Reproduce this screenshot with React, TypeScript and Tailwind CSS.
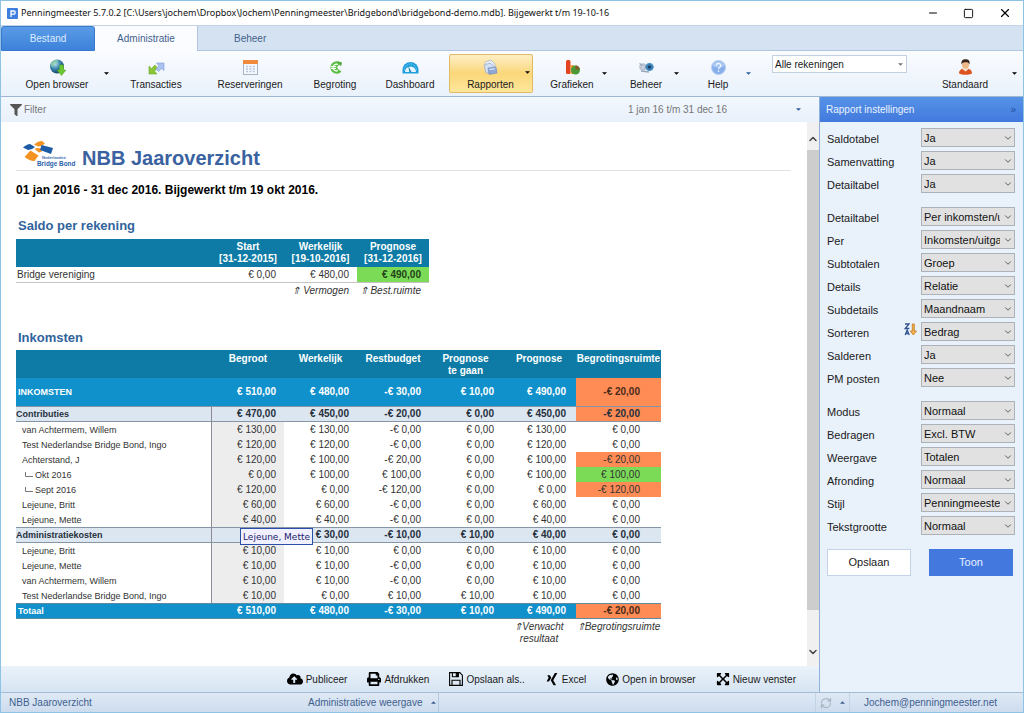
import React from "react";
import {
  FaCloudUploadAlt,
  FaExpandArrowsAlt,
  FaFilter,
  FaGlobeAmericas,
  FaPrint,
  FaXing,
} from "react-icons/fa";
import { ChevronDown, ChevronUp, Minus, RefreshCw, Square, X } from "lucide-react";

function Caret({ className = "text-black", up = false }: { className?: string; up?: boolean }) {
  return (
    <svg viewBox="0 0 6 3" className={`h-[3px] w-[5px] shrink-0 ${className}`} aria-hidden="true">
      <path d={up ? "M0 3h6L3 0z" : "M0 0h6L3 3z"} fill="currentColor" />
    </svg>
  );
}

function AppIcon() {
  return (
    <svg viewBox="0 0 11 11" className="size-[11px]" aria-hidden="true">
      <rect width="11" height="11" rx="1" fill="#3f7fe0" />
      <path d="M4 9V3h2.6a1.6 1.6 0 0 1 0 3.2H4" fill="none" stroke="#fff" strokeWidth="1.3" />
    </svg>
  );
}

function BrowserIcon() {
  return (
    <svg viewBox="0 0 17 17" className="size-[17px]" aria-hidden="true">
      <defs>
        <radialGradient id="globe" cx="35%" cy="30%" r="75%">
          <stop offset="0" stopColor="#bfe4ef" />
          <stop offset=".5" stopColor="#3a86ad" />
          <stop offset="1" stopColor="#123f63" />
        </radialGradient>
      </defs>
      <circle cx="8" cy="7.5" r="7" fill="url(#globe)" />
      <path d="M2 4c2-3 5-3.500 7-2.500L7.500 4 5 5 4 8 2 7z" fill="#8ccf9c" opacity=".7" />
      <path d="M10.500 6h4v5H17l-4.500 5.500L8 11h2.500z" fill="#6cc832" stroke="#4ba01f" strokeWidth=".5" />
    </svg>
  );
}

function TransferIcon() {
  return (
    <svg viewBox="0 0 17 17" className="size-[17px]" aria-hidden="true">
      <path d="M1 15V7l2.500 2.500L7 6l2.500 3-3 3.200L9 15z" fill="#8cc63a" stroke="#6da727" strokeWidth=".6" />
      <path d="M16 4v7.500L13.700 9.500 10.500 12.500 8 10l3-3-2.500-3z" fill="#a9c2ee" stroke="#7c9cdc" strokeWidth=".6" />
    </svg>
  );
}

function CalendarIcon() {
  return (
    <svg viewBox="0 0 17 17" className="size-[17px]" aria-hidden="true">
      <rect x="1.500" y="1.500" width="14" height="14" fill="#f5f8fc" stroke="#a7b4c8" />
      <rect x="1" y="1" width="15" height="4" fill="#f08a3c" />
      <path d="M4 7.500h9M4 10h9M4 12.500h9" stroke="#b9c6dc" strokeWidth="1.500" strokeDasharray="2 1.400" />
    </svg>
  );
}

function EuroIcon() {
  return (
    <svg viewBox="0 0 17 17" className="size-[17px]" aria-hidden="true">
      <path d="M14.500 4.500A6.300 6.300 0 1 0 14.500 12.500L11.500 10.500 10 8.500l1.500-2z" fill="#5cbf45" />
      <path d="M10.500 2.300l4.500 1.200-1 4z" fill="#4aa637" />
      <path d="M10.800 5.600a3.300 3.300 0 1 0 0 5.800M3.800 7.700h5.400M3.800 9.500h5" fill="none" stroke="#fff" strokeWidth="1.200" />
    </svg>
  );
}

function GaugeIcon() {
  return (
    <svg viewBox="0 0 17 17" className="size-[17px]" aria-hidden="true">
      <path d="M.5 14.500V11a8 8 0 0 1 16 0v3.500z" fill="#1f9fdc" />
      <path d="M3 13a5.500 5.500 0 0 1 11 0z" fill="#e9f7fd" />
      <path d="M2.500 11a6 6 0 0 1 12 0" fill="none" stroke="#9edcf6" strokeWidth="1" strokeDasharray="1 1.500" />
      <path d="M7.500 13.500L6 6.500l3.500 6.500z" fill="#1580bd" />
    </svg>
  );
}

function ReportsIcon() {
  return (
    <svg viewBox="0 0 17 17" className="size-[17px]" aria-hidden="true">
      <path d="M3 3l6-2 4 4v8H5z" fill="#e9eff9" stroke="#a6b3ca" strokeWidth=".7" />
      <path d="M2 6l6-2 4 3v7H4z" fill="#d3dff2" stroke="#98a8c6" strokeWidth=".7" />
      <path d="M6 9l8-1 1 6-8 1.500z" fill="#8fa9d6" stroke="#7189b8" strokeWidth=".6" />
      <path d="M7.500 10.500l5.500-.7" stroke="#e8effb" />
    </svg>
  );
}

function ChartIcon() {
  return (
    <svg viewBox="0 0 17 17" className="size-[17px]" aria-hidden="true">
      <rect x="2" y="1" width="4.500" height="14" rx="1.500" fill="#e4431f" />
      <rect x="6.500" y="6" width="3.500" height="9" rx="1" fill="#f09a3a" />
      <circle cx="11.500" cy="11" r="4.500" fill="#4b9a35" />
      <path d="M11.500 11V6.500A4.500 4.500 0 0 1 15.800 10z" fill="#8a5a2a" />
    </svg>
  );
}

function ManageIcon() {
  return (
    <svg viewBox="0 0 17 17" className="size-[17px]" aria-hidden="true">
      <circle cx="5" cy="8" r="3.300" fill="#c3ccd8" stroke="#98a4b5" strokeDasharray="1.500 1" />
      <path d="M1.500 4.500l3 2M3 12l8 1" stroke="#9aa8bd" strokeWidth="1.500" />
      <circle cx="11.500" cy="8" r="4" fill="#5b9cc9" />
      <path d="M7 8l4.500-4L16 8l-4.500 4z" fill="#3b7fb4" />
      <circle cx="11.500" cy="8" r="1.600" fill="#173d63" />
    </svg>
  );
}

function HelpIcon() {
  return (
    <svg viewBox="0 0 17 17" className="size-[17px]" aria-hidden="true">
      <circle cx="8.500" cy="8.500" r="7" fill="#86aeea" stroke="#b9d0f2" />
      <path d="M2.500 7a6.200 6.200 0 0 1 12 0c-3 2-9 2-12 0z" fill="#aac8f4" />
      <path d="M6.300 6.500a2.200 2.200 0 1 1 3.300 2q-1.100.6-1.100 1.700M8.500 11.600v1.400" fill="none" stroke="#f4f8ff" strokeWidth="1.300" />
    </svg>
  );
}

function UserIcon() {
  return (
    <svg viewBox="0 0 17 17" className="size-[17px]" aria-hidden="true">
      <path d="M2 14.500c0-4 3-5 6.500-5s6.500 1 6.500 5c-3 1.800-10 1.800-13 0z" fill="#dd5420" />
      <path d="M5.500 10l3 2.500 3-2.500-1.500-1.500H7z" fill="#f7e4d5" />
      <ellipse cx="8.500" cy="5.500" rx="3.500" ry="4.300" fill="#eeb98a" />
      <path d="M4.500 5.500C4 1.500 6 .3 8.500.3s4.800 1.200 4 5.200c-.8-2-2-2.500-4-2.300-1.800.1-3.200.3-4 2.300z" fill="#35241c" />
    </svg>
  );
}

function FloppyIcon() {
  return (
    <svg viewBox="0 0 14 14" className="size-[14px]" fill="none" stroke="#000" strokeWidth="1.100" aria-hidden="true">
      <path d="M.6.6h10.200l2.600 2.600v10.200H.6z" />
      <path d="M3.400.6v4.200h6V.6M3 13.400V8.200h8v5.200M7.300 1.600v2h1.300v-2z" />
    </svg>
  );
}

function SortIcon() {
  return (
    <svg viewBox="0 0 13 13" className="size-[13px]" aria-hidden="true">
      <path d="M1 1h4L1.300 5.500H5.300M1.200 12l2-5 2 5M1.800 10.500h2.700" fill="none" stroke="#33558f" strokeWidth="1.300" />
      <path d="M8.300 1h2v7H12.500L9.300 12 6.300 8h2z" fill="#f6b04f" stroke="#c57a1d" strokeWidth=".8" />
    </svg>
  );
}

function BridgeLogo() {
  return (
    <svg viewBox="0 0 60 30" className="h-[30px] w-[60px]" role="img" aria-label="Nederlandse Bridge Bond">
      <path d="M12 4.500q4-4 8-3.500l3 2.500q-3 3-7 3z" fill="#f39324" />
      <path d="M1 7.500q4-3.500 7-3.500l5 3q-3 3-7 3z" fill="#1c5ba6" />
      <path d="M12.500 9q3-1.500 6-.5l1.500 3-3 1z" fill="#f39324" />
      <path d="M19.500 5l11.500 3-2 6-11-4z" fill="#1c5ba6" />
      <path d="M8.500 10.500l8 5-4 5.500q-4 .5-10-4z" fill="#f39324" />
      <text x="20" y="18.500" fontSize="4" fontFamily="Liberation Sans, sans-serif" fontWeight="700" fill="#3a6eb0">
        Nederlandse
      </text>
      <text x="15" y="25.500" fontSize="6.400" fontFamily="Liberation Sans, sans-serif" fontWeight="700" fill="#2a62aa">
        Bridge Bond
      </text>
    </svg>
  );
}

function Tool({ icon, label, width }: { icon: React.ReactNode; label: string; width: string }) {
  return (
    <button type="button" className={`flex flex-col items-center gap-px whitespace-nowrap ${width}`}>
      {icon}
      <span className="leading-4">{label}</span>
    </button>
  );
}

function MenuArrow({ label, blue = false }: { label: string; blue?: boolean }) {
  return (
    <button type="button" aria-label={`${label} menu`} className="flex w-[10px] items-center justify-center self-stretch pb-[6px]">
      <Caret className={blue ? "text-[#2d5a9e]" : "text-black"} />
    </button>
  );
}

type Row = { kind: "item" | "sub" | "group"; label: string; cells: string[]; mark?: "bad" | "good"; tip?: string };

const rows: Row[] = [
  { kind: "group", label: "Contributies", cells: ["€ 470,00", "€ 450,00", "-€ 20,00", "€ 0,00", "€ 450,00", "-€ 20,00"], mark: "bad" },
  { kind: "item", label: "van Achtermem, Willem", cells: ["€ 130,00", "€ 130,00", "-€ 0,00", "€ 0,00", "€ 130,00", "€ 0,00"] },
  { kind: "item", label: "Test Nederlandse Bridge Bond, Ingo", cells: ["€ 120,00", "€ 120,00", "-€ 0,00", "€ 0,00", "€ 120,00", "€ 0,00"] },
  { kind: "item", label: "Achterstand, J", cells: ["€ 120,00", "€ 100,00", "-€ 20,00", "€ 0,00", "€ 100,00", "-€ 20,00"], mark: "bad" },
  { kind: "sub", label: "Okt 2016", cells: ["€ 0,00", "€ 100,00", "€ 100,00", "€ 0,00", "€ 100,00", "€ 100,00"], mark: "good" },
  { kind: "sub", label: "Sept 2016", cells: ["€ 120,00", "€ 0,00", "-€ 120,00", "€ 0,00", "€ 0,00", "-€ 120,00"], mark: "bad" },
  { kind: "item", label: "Lejeune, Britt", cells: ["€ 60,00", "€ 60,00", "-€ 0,00", "€ 0,00", "€ 60,00", "€ 0,00"] },
  { kind: "item", label: "Lejeune, Mette", cells: ["€ 40,00", "€ 40,00", "-€ 0,00", "€ 0,00", "€ 40,00", "€ 0,00"] },
  {
    kind: "group",
    label: "Administratiekosten",
    cells: ["", "€ 30,00", "-€ 10,00", "€ 10,00", "€ 40,00", "€ 0,00"],
    tip: "Lejeune, Mette",
  },
  { kind: "item", label: "Lejeune, Britt", cells: ["€ 10,00", "€ 10,00", "€ 0,00", "€ 0,00", "€ 10,00", "€ 0,00"] },
  { kind: "item", label: "Lejeune, Mette", cells: ["€ 10,00", "€ 10,00", "-€ 0,00", "€ 0,00", "€ 10,00", "€ 0,00"] },
  { kind: "item", label: "van Achtermem, Willem", cells: ["€ 10,00", "€ 10,00", "-€ 0,00", "€ 0,00", "€ 10,00", "€ 0,00"] },
  { kind: "item", label: "Test Nederlandse Bridge Bond, Ingo", cells: ["€ 10,00", "€ 0,00", "€ 10,00", "€ 10,00", "€ 10,00", "€ 0,00"] },
];

const valuePadding = ["pr-2", "pr-2", "pr-2", "pr-2", "pr-[10px]", "pr-[21px]"];

function DetailRow({ row }: { row: Row }) {
  const group = row.kind === "group";
  const line = group ? "border-y border-[#8796a6] h-4 font-bold text-[#26303c]" : "h-[15px]";
  return (
    <tr className={group ? "bg-[#dce6f1]" : ""}>
      <th
        scope="row"
        className={`border-r border-r-[#8c8c96] text-left text-[9px] ${line} ${group ? "" : "font-normal"} ${
          row.kind === "sub" ? "pl-[9px]" : group ? "" : "pl-[6px]"
        }`}
      >
        {row.kind === "sub" && (
          <svg viewBox="0 0 8 5" className="mr-[2px] mb-[2px] inline h-[5px] w-2" aria-hidden="true">
            <path d="M.5 0v4.500H8" fill="none" stroke="#777" />
          </svg>
        )}
        {row.label}
      </th>
      {row.cells.map((cell, i) => {
        const bg =
          i === 5 && row.mark === "bad" ? "bg-[#ff8c55]" : i === 5 && row.mark === "good" ? "bg-[#7bdb57]" : i === 0 && !group ? "bg-[#ededed]" : "";
        return (
          <td key={i} className={`text-right ${line} ${valuePadding[i]} ${bg} ${i === 0 && row.tip ? "relative" : ""}`}>
            {cell}
            {i === 0 && row.tip && (
              <span
                role="tooltip"
                className="absolute top-0 left-[28px] z-10 flex h-[17px] items-center border border-[#2b4fa8] bg-[#f0f0ff] px-[2px] font-['DejaVu_Sans',sans-serif] text-[9px] font-normal whitespace-nowrap text-[#1c1c6e]"
              >
                {row.tip}
              </span>
            )}
          </td>
        );
      })}
    </tr>
  );
}

function TotalRow({ label, cells, tall = false }: { label: string; cells: string[]; tall?: boolean }) {
  const h = tall ? "h-7" : "h-4 border-y border-[#5f88a3]";
  return (
    <tr className="bg-[#1191cb] font-bold text-white">
      <th scope="row" className={`pl-[2px] text-left text-[9px] ${h}`}>
        {label}
      </th>
      {cells.map((cell, i) => (
        <td key={i} className={`text-right ${h} ${valuePadding[i]} ${i === 5 ? "bg-[#ff8c55] text-[#4a2a1a]" : ""}`}>
          {cell}
        </td>
      ))}
    </tr>
  );
}

const settings: [string, string][][] = [
  [
    ["Saldotabel", "Ja"],
    ["Samenvatting", "Ja"],
    ["Detailtabel", "Ja"],
  ],
  [
    ["Detailtabel", "Per inkomsten/uitgaven"],
    ["Per", "Inkomsten/uitgaven"],
    ["Subtotalen", "Groep"],
    ["Details", "Relatie"],
    ["Subdetails", "Maandnaam"],
    ["Sorteren", "Bedrag"],
    ["Salderen", "Ja"],
    ["PM posten", "Nee"],
  ],
  [
    ["Modus", "Normaal"],
    ["Bedragen", "Excl. BTW"],
    ["Weergave", "Totalen"],
    ["Afronding", "Normaal"],
    ["Stijl", "Penningmeester"],
    ["Tekstgrootte", "Normaal"],
  ],
];

function Setting({ id, label, value }: { id: string; label: string; value: string }) {
  return (
    <div className="flex h-[23px] items-center">
      <label htmlFor={id} className="flex-1 pt-1">
        {label}
      </label>
      {label === "Sorteren" && (
        <span className="mr-1 mb-1">
          <SortIcon />
        </span>
      )}
      <div className="relative w-[94px]">
        <select
          id={id}
          defaultValue={value}
          className="block h-[19px] w-full appearance-none overflow-hidden border border-[#adb2b8] bg-[#e1e1e1] pr-[14px] pl-[2px] leading-4 text-[#111]"
        >
          <option>{value}</option>
        </select>
        <ChevronDown className="pointer-events-none absolute top-[5px] right-[2px] size-[10px] text-[#444]" aria-hidden="true" />
      </div>
    </div>
  );
}

const actions = [
  { label: "Publiceer", icon: <FaCloudUploadAlt className="size-4" /> },
  { label: "Afdrukken", icon: <FaPrint className="size-[14px]" /> },
  { label: "Opslaan als..", icon: <FloppyIcon /> },
  { label: "Excel", icon: <FaXing className="size-[14px]" /> },
  { label: "Open in browser", icon: <FaGlobeAmericas className="size-[13px]" /> },
  { label: "Nieuw venster", icon: <FaExpandArrowsAlt className="size-[14px]" /> },
];

export default function App() {
  return (
    <div className="flex min-h-screen flex-col border border-[#8fc3e6] bg-[#e9f1fb] font-['Liberation_Sans',Arial,sans-serif] text-[10px] text-[#1a1a1a]">
      <header className="flex h-6 items-center bg-white pl-[6px]">
        <AppIcon />
        <h1 className="ml-[3px] flex-1 truncate font-['Noto_Sans',sans-serif] text-[9px] text-[#111]">
          Penningmeester 5.7.0.2 [C:\Users\jochem\Dropbox\Jochem\Penningmeester\Bridgebond\bridgebond-demo.mdb]. Bijgewerkt t/m 19-10-16
        </h1>
        <div className="flex items-center gap-[24px] pr-[11px] text-black">
          <button type="button" aria-label="Minimaliseren">
            <Minus className="size-3" strokeWidth={2} />
          </button>
          <button type="button" aria-label="Maximaliseren">
            <Square className="size-[11px]" strokeWidth={2} />
          </button>
          <button type="button" aria-label="Sluiten">
            <X className="size-[14px]" strokeWidth={2} />
          </button>
        </div>
      </header>

      <nav className="flex h-[26px] border-t border-[#c5d5e8] bg-[#d5e2f1] text-[#44618c]">
        <button type="button" className="w-[94px] rounded-t-[3px] border border-[#3a79c9] bg-linear-to-b from-[#5a9be6] to-[#3c82da] text-[#dcebff]">
          Bestand
        </button>
        <button type="button" className="w-[102px] bg-[#fafcff]">
          Administratie
        </button>
        <button type="button" className="flex-1 border-b border-l border-[#b0c6e0] pl-[36px] text-left">
          Beheer
        </button>
      </nav>

      <div className="flex h-[46px] items-start border-b border-[#9fb6d4] bg-linear-to-b from-[#fafcff] to-[#e9f1fb]">
        <div className="flex h-[45px] items-center pt-[5px] pl-3">
          <Tool icon={<BrowserIcon />} label="Open browser" width="w-[88px]" />
          <MenuArrow label="Open browser" />
          <Tool icon={<TransferIcon />} label="Transacties" width="w-[90px]" />
          <Tool icon={<CalendarIcon />} label="Reserveringen" width="w-[98px]" />
          <Tool icon={<EuroIcon />} label="Begroting" width="w-[72px]" />
          <Tool icon={<GaugeIcon />} label="Dashboard" width="w-[78px]" />
          <div className="-mt-[2px] flex h-[39px] items-center self-start rounded-[2px] border border-[#e0bb62] bg-linear-to-b from-[#fdeec4] via-[#fbd779] to-[#fde79b] pt-[4px] pl-[9px]">
            <Tool icon={<ReportsIcon />} label="Rapporten" width="w-[63px]" />
            <MenuArrow label="Rapporten" />
          </div>
          <div className="flex items-center self-stretch pl-3">
            <Tool icon={<ChartIcon />} label="Grafieken" width="w-[54px]" />
            <MenuArrow label="Grafieken" />
          </div>
          <div className="flex items-center self-stretch pl-3">
            <Tool icon={<ManageIcon />} label="Beheer" width="w-[50px]" />
            <MenuArrow label="Beheer" />
          </div>
          <div className="flex items-center self-stretch pl-3">
            <Tool icon={<HelpIcon />} label="Help" width="w-[50px]" />
            <MenuArrow label="Help" blue />
          </div>
        </div>
        <div className="relative mt-1 ml-[19px] w-[135px]">
          <select aria-label="Rekeningen" className="block h-[18px] w-full appearance-none border border-[#c3d0e0] bg-white pl-[2px]">
            <option>Alle rekeningen</option>
          </select>
          <span className="pointer-events-none absolute top-[8px] right-1 flex">
            <Caret className="text-[#777]" />
          </span>
        </div>
        <div className="ml-auto flex h-[45px] items-center pt-[5px] pr-1">
          <Tool icon={<UserIcon />} label="Standaard" width="w-[88px]" />
          <MenuArrow label="Standaard" />
        </div>
      </div>

      <div className="flex flex-1">
        <main className="flex min-w-0 flex-1 flex-col">
          <div className="flex h-[25px] items-center bg-linear-to-b from-[#f3f8fe] to-[#e8f0fa] pr-[18px] pl-[9px] text-[#777]">
            <FaFilter className="size-[12px] text-[#555]" aria-hidden="true" />
            <button type="button" className="ml-[2px]">
              Filter
            </button>
            <button type="button" className="ml-auto flex items-center gap-[69px]">
              1 jan 16 t/m 31 dec 16
              <Caret className="text-[#2d5a9e]" />
            </button>
          </div>

          <div className="flex flex-1 bg-white">
            <article className="min-w-0 flex-1 pl-[15px] text-[#333]">
              <div className="mr-4 flex h-[49px] items-end border-b border-[#e2e2e2] pl-[6px]">
                <BridgeLogo />
                <h2 className="text-[20px] leading-6 font-bold text-[#3a62a0]">NBB Jaaroverzicht</h2>
              </div>
              <p className="mt-[11px] text-[12px] leading-4 font-bold text-black">01 jan 2016 - 31 dec 2016. Bijgewerkt t/m 19 okt 2016.</p>

              <h3 className="mt-5 pl-[2px] text-[13px] leading-4 font-bold text-[#31639c]">Saldo per rekening</h3>
              <table className="mt-[5px] w-[413px] table-fixed border-separate border-spacing-0 leading-3">
                <colgroup>
                  <col className="w-[196px]" />
                  <col className="w-[72px]" />
                  <col className="w-[73px]" />
                  <col className="w-[72px]" />
                </colgroup>
                <thead>
                  <tr className="h-7 bg-[#0d7ba5] text-white">
                    <td />
                    <th scope="col">
                      Start
                      <br />
                      [31-12-2015]
                    </th>
                    <th scope="col">
                      Werkelijk
                      <br />
                      [19-10-2016]
                    </th>
                    <th scope="col">
                      Prognose
                      <br />
                      [31-12-2016]
                    </th>
                  </tr>
                </thead>
                <tbody>
                  <tr>
                    <th scope="row" className="h-4 border-b border-[#c4c4c4] pl-px text-left font-normal">
                      Bridge vereniging
                    </th>
                    <td className="border-b border-[#c4c4c4] pr-2 text-right">€ 0,00</td>
                    <td className="border-b border-[#c4c4c4] pr-2 text-right">€ 480,00</td>
                    <td className="border-b border-[#c4c4c4] bg-[#7bdb57] pr-2 text-right font-bold text-[#24421a]">€ 490,00</td>
                  </tr>
                  <tr className="italic">
                    <td className="h-4" />
                    <td />
                    <td className="pr-2 text-right whitespace-nowrap">⇑ Vermogen</td>
                    <td className="pr-2 text-right whitespace-nowrap">⇑ Best.ruimte</td>
                  </tr>
                </tbody>
              </table>

              <h3 className="mt-[31px] pl-[2px] text-[13px] leading-4 font-bold text-[#31639c]">Inkomsten</h3>
              <table className="mt-1 w-[645px] table-fixed border-separate border-spacing-0 leading-3">
                <colgroup>
                  <col className="w-[196px]" />
                  <col className="w-[72px]" />
                  <col className="w-[73px]" />
                  <col className="w-[72px]" />
                  <col className="w-[73px]" />
                  <col className="w-[74px]" />
                  <col className="w-[85px]" />
                </colgroup>
                <thead>
                  <tr className="h-7 bg-[#0d7ba5] align-top text-white">
                    <td />
                    <th scope="col" className="pt-[3px]">Begroot</th>
                    <th scope="col" className="pt-[3px]">Werkelijk</th>
                    <th scope="col" className="pt-[3px]">Restbudget</th>
                    <th scope="col" className="pt-[3px]">
                      Prognose
                      <br />
                      te gaan
                    </th>
                    <th scope="col" className="pt-[3px]">Prognose</th>
                    <th scope="col" className="pt-[3px]">Begrotingsruimte</th>
                  </tr>
                </thead>
                <tbody>
                  <TotalRow tall label="INKOMSTEN" cells={["€ 510,00", "€ 480,00", "-€ 30,00", "€ 10,00", "€ 490,00", "-€ 20,00"]} />
                  {rows.map((row, i) => (
                    <DetailRow key={i} row={row} />
                  ))}
                  <TotalRow label="Totaal" cells={["€ 510,00", "€ 480,00", "-€ 30,00", "€ 10,00", "€ 490,00", "-€ 20,00"]} />
                </tbody>
                <tfoot>
                  <tr className="align-top italic">
                    <td colSpan={5} />
                    <td className="pt-[2px] text-center">
                      ⇑Verwacht
                      <br />
                      resultaat
                    </td>
                    <td className="pt-[2px] text-center whitespace-nowrap">⇑Begrotingsruimte</td>
                  </tr>
                </tfoot>
              </table>
            </article>

            <div className="flex w-3 flex-col items-center bg-[#f0f0f0] text-[#444]" aria-hidden="true">
              <div className="flex h-7 items-end pb-[5px]">
                <ChevronUp className="size-3" strokeWidth={3} />
              </div>
              <div className="w-full flex-[460] bg-[#cdcdcd]" />
              <div className="flex-[28]" />
              <div className="flex h-7 items-center">
                <ChevronDown className="size-3" strokeWidth={3} />
              </div>
            </div>
          </div>

          <div className="flex h-[26px] items-center justify-end gap-5 bg-linear-to-b from-[#eaf2fa] to-[#d6e4f2] pr-[23px]">
            {actions.map((action) => (
              <button key={action.label} type="button" className="flex items-center gap-[3px] whitespace-nowrap">
                <span className="text-black">{action.icon}</span>
                {action.label}
              </button>
            ))}
          </div>
        </main>

        <aside className="w-[204px] shrink-0 border-l border-[#8fb0d8] bg-[#e9f1fb]">
          <div className="flex h-[25px] items-center justify-between bg-linear-to-b from-[#5593e6] to-[#4379de] pr-[7px] pl-[6px] text-[#eaf3ff]">
            <h2>Rapport instellingen</h2>
            <button type="button" aria-label="Inklappen" className="text-[#1d4fa3]">
              »
            </button>
          </div>
          <form className="pt-1 pr-2 pl-[7px] text-[11px]" onSubmit={(e) => e.preventDefault()}>
            <div className="flex flex-col gap-[10px]">
              {settings.map((group, g) => (
                <div key={g}>
                  {group.map(([label, value], i) => (
                    <Setting key={label} id={`setting-${g}-${i}`} label={label} value={value} />
                  ))}
                </div>
              ))}
            </div>
            <div className="mt-3 flex justify-between pr-[2px]">
              <button type="button" className="h-[27px] w-[84px] border border-[#c4d3e8] bg-white">
                Opslaan
              </button>
              <button type="submit" className="h-[27px] w-[84px] bg-[#4379df] text-[#e6efff]">
                Toon
              </button>
            </div>
          </form>
        </aside>
      </div>

      <footer className="flex h-5 items-center border-t border-[#a3bcd8] bg-linear-to-b from-[#dfe9f5] to-[#cddcee] text-[#3f5f8f]">
        <span className="w-[307px] pl-2">NBB Jaaroverzicht</span>
        <button type="button" className="flex h-full items-center gap-2 border-r border-[#b4c8e0] pr-[2px]">
          Administratieve weergave
          <Caret up className="text-[#3f5f8f]" />
        </button>
        <div className="ml-auto flex h-full w-[208px] items-center border-l border-[#c3d3e6]">
          <button type="button" aria-label="Vernieuwen" className="ml-1 text-[#aab4c0]">
            <RefreshCw className="size-3" strokeWidth={2.5} />
          </button>
          <button type="button" aria-label="Synchronisatie menu" className="ml-2 flex h-full items-center border-r border-[#c3d3e6] pr-1">
            <Caret up className="text-[#3f5f8f]" />
          </button>
          <span className="ml-[14px]">Jochem@penningmeester.net</span>
        </div>
      </footer>
    </div>
  );
}
